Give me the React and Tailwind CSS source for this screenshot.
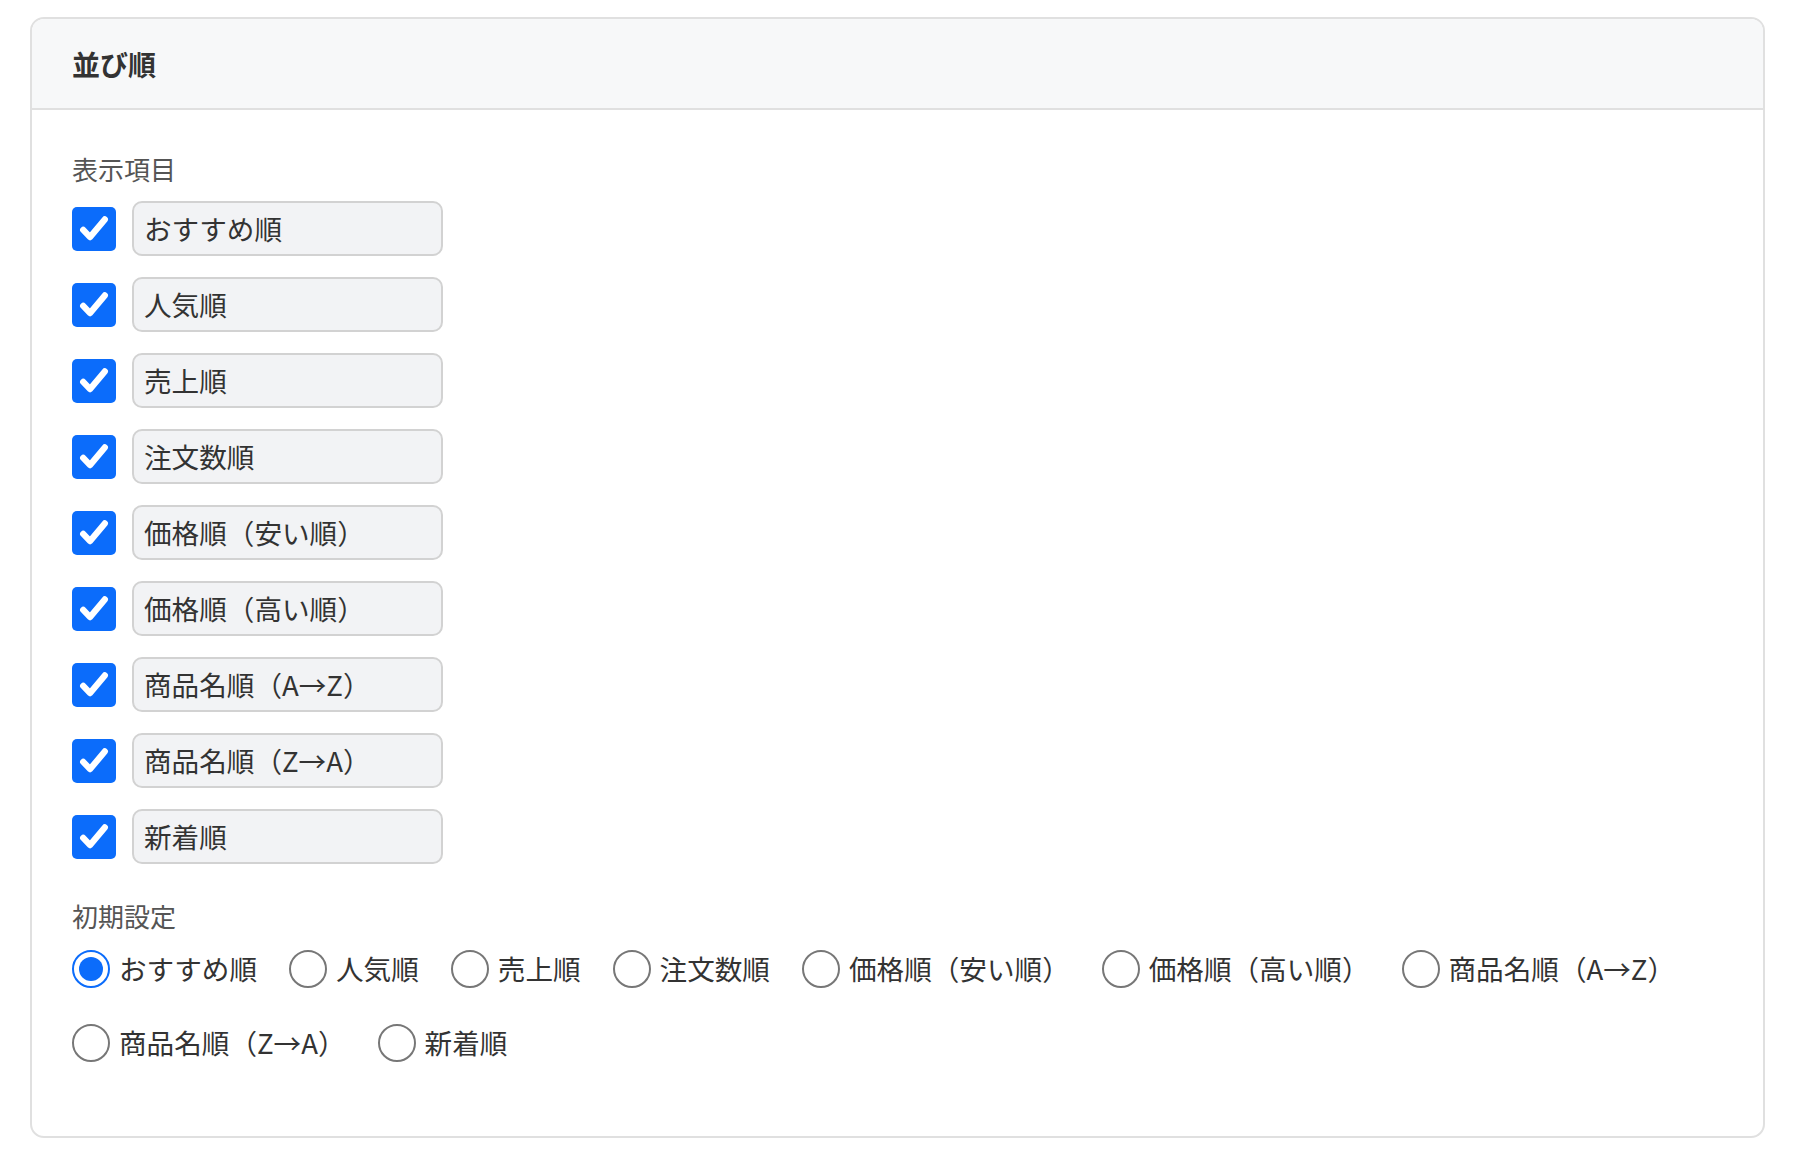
import { useState } from "react";

const OPTIONS = [
  "おすすめ順",
  "人気順",
  "売上順",
  "注文数順",
  "価格順（安い順）",
  "価格順（高い順）",
  "商品名順（A→Z）",
  "商品名順（Z→A）",
  "新着順",
];

const font = { fontFamily: '"Noto Sans CJK JP", "Noto Sans", sans-serif' };

function CheckBox({ checked, onChange }) {
  return (
    <button
      type="button"
      onClick={onChange}
      className={
        "w-[44px] h-[44px] shrink-0 rounded-[5px] flex items-center justify-center " +
        (checked ? "bg-[#0b6cfb]" : "bg-white border-2 border-[#999]")
      }
    >
      {checked && (
        <svg viewBox="0 0 24 24" className="w-[36px] h-[36px]">
          <path
            d="M4.8 12.6 L9.4 17.4 L19.2 5.6"
            fill="none"
            stroke="white"
            strokeWidth="4.2"
            strokeLinecap="round"
            strokeLinejoin="round"
          />
        </svg>
      )}
    </button>
  );
}

function Radio({ checked }) {
  return checked ? (
    <span className="w-[38px] h-[38px] shrink-0 rounded-full border-[2.5px] border-[#0b6cfb] flex items-center justify-center">
      <span className="w-[24px] h-[24px] rounded-full bg-[#0b6cfb]" />
    </span>
  ) : (
    <span className="w-[38px] h-[38px] shrink-0 rounded-full border-[2px] border-[#777]" />
  );
}

export default function App() {
  const [visible, setVisible] = useState(OPTIONS.map(() => true));
  const [initial, setInitial] = useState(0);

  const toggle = (i) => setVisible(visible.map((v, j) => (j === i ? !v : v)));

  return (
    <div className="w-[1794px] h-[1152px] bg-white pt-[17px] pl-[30px] pr-[29px]" style={font}>
      <div className="border-2 border-[#e0e0e0] rounded-[14px] overflow-hidden">
        {/* Header */}
        <div className="h-[91px] bg-[#f7f8f9] border-b-2 border-[#e0e0e0] px-[40px] flex items-center">
          <h2 className="text-[28px] font-bold text-[#333] leading-none">並び順</h2>
        </div>

        {/* Body */}
        <div className="px-[40px] pt-[41px] pb-[69px]">
          <div className="text-[26px] leading-[36px] text-[#555]">表示項目</div>

          <div className="mt-[14px] flex flex-col gap-[21px]">
            {OPTIONS.map((label, i) => (
              <div key={label} className="flex items-center gap-[16px]">
                <CheckBox checked={visible[i]} onChange={() => toggle(i)} />
                <div className="w-[311px] h-[55px] rounded-[10px] border-2 border-[#d2d2d2] bg-[#f2f3f5] px-[10px] flex items-center text-[27.6px] text-[#333]">
                  {label}
                </div>
              </div>
            ))}
          </div>

          <div className="mt-[34px] text-[26px] leading-[36px] text-[#555]">初期設定</div>

          <div className="mt-[11px] flex flex-wrap gap-x-[32px] gap-y-[26px]">
            {OPTIONS.map((label, i) => (
              <label
                key={label}
                onClick={() => setInitial(i)}
                className="h-[48px] flex items-center gap-[9px] cursor-pointer"
              >
                <Radio checked={initial === i} />
                <span className="text-[27.6px] text-[#333] whitespace-nowrap">{label}</span>
              </label>
            ))}
          </div>
        </div>
      </div>
    </div>
  );
}
